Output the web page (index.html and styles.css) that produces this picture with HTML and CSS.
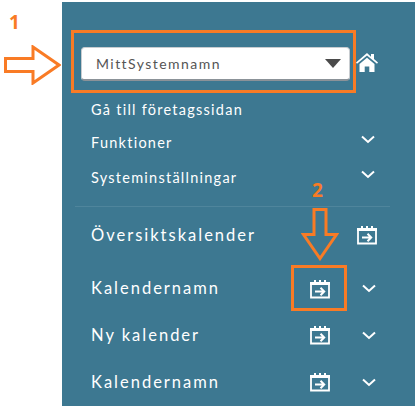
FILE: index.html
```html
<!DOCTYPE html>
<html lang="sv">
<head>
<meta charset="utf-8">
<title>Meny</title>
<link rel="stylesheet" href="styles.css">
</head>
<body>
<svg width="0" height="0" class="defs">
  <symbol id="cal" viewBox="0 0 20 20">
    <path d="M1 4h18v14.500H1z" fill="none" stroke="#fff" stroke-width="1.800"/>
    <path d="M0 3h20v3H0z" fill="#fff"/>
    <path d="M4 1h2v3H4zM9 1h2v3H9zM14 1h2v3h-2z" fill="#fff"/>
    <path d="M5 12.500h9M10.500 8.800l3.700 3.700-3.700 3.700" fill="none" stroke="#fff" stroke-width="2"/>
  </symbol>
  <symbol id="chev" viewBox="0 0 14 9">
    <path d="M1 1.500l6 5.500 6-5.500" fill="none" stroke="#fff" stroke-width="2"/>
  </symbol>
</svg>
<main class="panel">
  <div class="top">
    <div class="select"><span>MittSystemnamn</span><i class="caret"></i></div>
    <svg class="home" viewBox="0 0 22 19"><path d="M11 0L0 9.500l1 1.300L11 2.400l10 8.400 1-1.300-4-3.400V1h-3v2.800zM3.500 11L11 4.800l7.500 6.200v8h-5.200v-5.500H8.700V19H3.500z" fill="#fff"/></svg>
  </div>
  <nav class="small">
    <a class="row r1">Gå till företagssidan</a>
    <a class="row r2">Funktioner<svg class="chev"><use href="#chev"/></svg></a>
    <a class="row r3">Systeminställningar<svg class="chev"><use href="#chev"/></svg></a>
  </nav>
  <hr class="divider">
  <nav class="large">
    <a class="row c1"><span class="name">Översiktskalender</span><svg class="cal"><use href="#cal"/></svg></a>
    <a class="row c2"><span class="name">Kalendernamn</span><svg class="cal"><use href="#cal"/></svg><svg class="chev"><use href="#chev"/></svg></a>
    <a class="row c3"><span class="name">Ny kalender</span><svg class="cal"><use href="#cal"/></svg><svg class="chev"><use href="#chev"/></svg></a>
    <a class="row c4"><span class="name">Kalendernamn</span><svg class="cal"><use href="#cal"/></svg><svg class="chev"><use href="#chev"/></svg></a>
  </nav>
</main>
<span class="num n1">1</span>
<span class="num n2">2</span>
<div class="box b1"></div>
<div class="box b2"></div>
<svg class="arrow a1" viewBox="0 0 57 40"><path d="M1.500 13.500H29V2L55 20 29 38V26.500H1.500z" fill="none" stroke="#f97b25" stroke-width="3"/></svg>
<svg class="arrow a2" viewBox="0 0 38 53"><path d="M13 1.500H25V26.500H35.500L19 50.500 2.500 26.500H13z" fill="none" stroke="#f97b25" stroke-width="3"/></svg>
</body>
</html>
```
FILE: styles.css
```css
html, body { margin: 0; padding: 0; background: #fff; }
body { position: relative; width: 420px; height: 411px; overflow: hidden; font-family: Lato, sans-serif; }
.defs { position: absolute; }
.panel { box-sizing: border-box; margin: 2px 0 0 62px; width: 353px; height: 404px; background: #3d7891; padding-top: 45px; color: #fff; }
.top { display: flex; align-items: center; height: 34px; padding-left: 19px; }
.select { box-sizing: border-box; width: 269px; height: 34px; background: #fff; border: 1px solid #c8ccd0; border-bottom: 2px solid #8b9298; border-radius: 4px; display: flex; align-items: center; justify-content: space-between; padding: 0 8px 0 14px; font-size: 14px; letter-spacing: 1.450px; color: #555; }
.caret { width: 0; height: 0; border-left: 8px solid transparent; border-right: 8px solid transparent; border-top: 9px solid #4a4a4a; }
.home { width: 22px; height: 19px; margin: -4px 0 0 6px; }
.small { display: flex; flex-direction: column; padding-top: 18px; font-size: 14.500px; letter-spacing: 1.250px; }
.row { display: flex; align-items: center; padding-left: 29px; white-space: nowrap; }
.small .row { height: 20px; }
.r2 { margin-top: 13px; }
.r3 { margin-top: 15px; }
.small .chev { margin-left: auto; margin-right: 40px; margin-top: -6px; }
.chev { width: 14px; height: 9px; flex: none; }
.divider { margin: 19px 25px 0 13px; border: 0; height: 1px; background: #4f859c; }
.large { display: flex; flex-direction: column; font-size: 16.500px; letter-spacing: 2px; padding-top: 17px; }
.large .row { height: 22px; }
.c2 { margin-top: 31px; }
.c3 { margin-top: 25px; }
.c4 { margin-top: 25px; }
.name { width: 218px; }
.cal { width: 20px; height: 20px; flex: none; margin: 0 32px 0 1px; }
.c1 .cal { margin-left: 48px; margin-right: 0; }
.c2 .cal { margin-top: 2px; }
.num, .box, .arrow { position: absolute; }
.num { color: #f97b25; font: bold 19px "Noto Sans", sans-serif; line-height: 20px; }
.n1 { left: 9px; top: 12px; }
.n2 { left: 312px; top: 180px; }
.box { box-sizing: border-box; border: 3px solid #f97b25; }
.b1 { left: 71px; top: 30px; width: 285px; height: 63px; }
.b2 { left: 291px; top: 265px; width: 56px; height: 46px; }
.a1 { left: 4px; top: 45px; width: 57px; height: 40px; }
.a2 { left: 301px; top: 208px; width: 38px; height: 53px; }
```
